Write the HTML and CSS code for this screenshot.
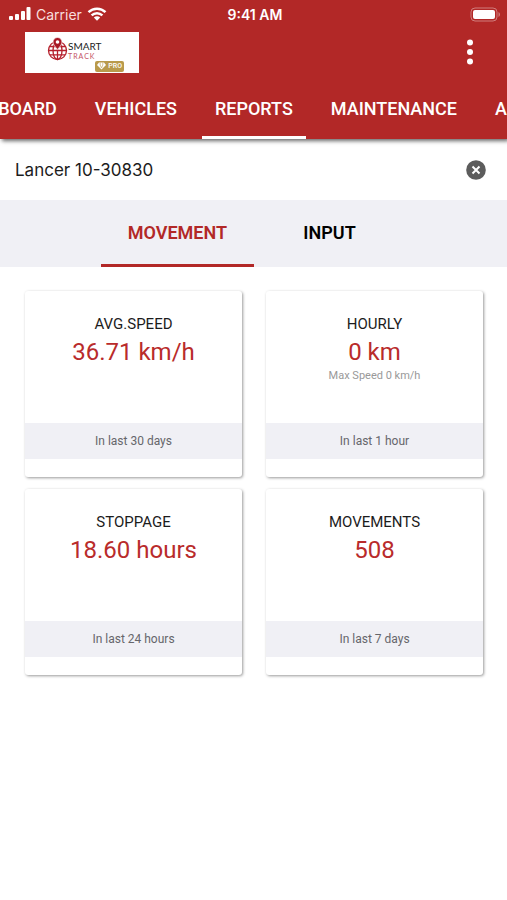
FILE: index.html
```html
<!DOCTYPE html>
<html lang="en">
<head>
<meta charset="utf-8">
<meta name="viewport" content="width=device-width, initial-scale=1">
<title>Smart Track Pro</title>
<link rel="stylesheet" href="styles.css">
</head>
<body>
<header class="app-header">
  <div class="status-bar">
    <div class="carrier">
      <svg width="22" height="14" viewBox="0 0 22 14" fill="#fff" aria-hidden="true">
        <rect x="0" y="9" width="4" height="4" rx="1"/><rect x="6" y="7" width="4" height="6" rx="1"/><rect x="12" y="4" width="4" height="9" rx="1"/><rect x="17.500" y="0" width="4" height="13" rx="1"/>
      </svg>
      <span>Carrier</span>
      <svg width="20" height="14" viewBox="0 0 20 14" aria-hidden="true">
        <path d="M1.500 5.200C6.300.600 13.700.600 18.500 5.200M4.600 8.300c3.100-2.900 7.700-2.900 10.800 0" fill="none" stroke="#fff" stroke-width="2.500"/>
        <path d="M6.800 10.600c1.800-1.700 4.600-1.700 6.400 0L10 13.800z" fill="#fff"/>
      </svg>
    </div>
    <time class="clock">9:41 AM</time>
    <svg class="battery" width="31" height="15" viewBox="0 0 31 15" aria-hidden="true">
      <rect x="1" y="1" width="26" height="13" rx="4" fill="none" stroke="#d07c7c"/>
      <rect x="3" y="3" width="22" height="9" rx="2" fill="#fff"/>
      <path d="M28.500 5c2 1 2 4 0 5z" fill="#d07c7c"/>
    </svg>
  </div>
  <div class="brand-bar">
    <a class="logo" href="#" aria-label="Smart Track Pro">
      <svg class="globe" width="21" height="24" viewBox="0 0 21 24" aria-hidden="true">
        <g fill="none" stroke="#b51f2b" stroke-width="1.300">
          <circle cx="10.500" cy="13.500" r="9"/><ellipse cx="10.500" cy="13.500" rx="4.500" ry="9"/>
          <path d="M10.500 8v14.500M1.500 13.500h18M3 9.500h15M3 17.800h15"/>
        </g>
        <path d="M10.500 12.500C8 9.500 6 7.500 6 5a4.500 4.500 0 0 1 9 0c0 2.500-2 4.500-4.500 7.500z" fill="#a81724" stroke="#fff" stroke-width=".7"/>
        <circle cx="10.500" cy="5" r="1.800" fill="#fff"/>
      </svg>
      <span class="logo-text"><span class="smart">SMART</span><span class="track">TRACK</span></span>
      <span class="pro"><svg width="9" height="8" viewBox="0 0 9 8" aria-hidden="true"><path d="M2 .5h5l2 2.500-4.500 4.500L0 3z" fill="#fff"/><path d="M3.200.500v2.500l1.300 3 1.300-3V.500" fill="none" stroke="#b99a4b" stroke-width=".6"/></svg>PRO</span>
    </a>
    <button class="more" type="button" aria-label="More options">
      <svg width="6" height="26" viewBox="0 0 6 26" fill="#fff" aria-hidden="true"><circle cx="3" cy="3.500" r="3"/><circle cx="3" cy="13" r="3"/><circle cx="3" cy="22.500" r="3"/></svg>
    </button>
  </div>
  <nav class="main-nav">
    <div class="nav-track">
      <a href="#">DASHBOARD</a>
      <a href="#">VEHICLES</a>
      <a href="#" class="current" aria-current="page">REPORTS</a>
      <a href="#">MAINTENANCE</a>
      <a href="#">ALERTS</a>
    </div>
  </nav>
</header>
<main>
  <div class="vehicle">
    <input class="vehicle-input" type="text" value="Lancer 10-30830" aria-label="Vehicle">
    <button class="clear" type="button" aria-label="Clear">
      <svg width="20" height="20" viewBox="0 0 20 20" aria-hidden="true"><circle cx="10" cy="10" r="9.800" fill="#5c5c5c"/><path d="M6.500 6.500l7 7M13.500 6.500l-7 7" stroke="#fff" stroke-width="2"/></svg>
    </button>
  </div>
  <div class="report-tabs">
    <button class="report-tab selected" type="button">MOVEMENT</button>
    <button class="report-tab" type="button">INPUT</button>
  </div>
  <section class="cards">
    <article class="card">
      <div class="card-body"><h2>AVG.SPEED</h2><p class="value">36.71 km/h</p></div>
      <p class="period">In last 30 days</p>
    </article>
    <article class="card">
      <div class="card-body"><h2>HOURLY</h2><p class="value">0 km</p><p class="note">Max Speed 0 km/h</p></div>
      <p class="period">In last 1 hour</p>
    </article>
    <article class="card">
      <div class="card-body"><h2>STOPPAGE</h2><p class="value">18.60 hours</p></div>
      <p class="period">In last 24 hours</p>
    </article>
    <article class="card">
      <div class="card-body"><h2>MOVEMENTS</h2><p class="value">508</p></div>
      <p class="period">In last 7 days</p>
    </article>
  </section>
</main>
</body>
</html>
```
FILE: styles.css
```css
* { box-sizing: border-box; }
body { margin: 0; background: #fff; color: #1c1c1c; font-family: Roboto, sans-serif; }
h2, p { margin: 0; font-weight: 400; }
button { border: 0; padding: 0; background: none; font: inherit; }
a { color: inherit; text-decoration: none; }
svg { display: block; }

.app-header { background: #b22827; color: #fff; box-shadow: 2px 2px 4px rgba(0, 0, 0, 0.6); }
.status-bar { display: grid; grid-template-columns: 1fr auto 1fr; align-items: center; height: 28px; padding: 0 6px 0 9px; font-family: Inter, sans-serif; font-size: 14px; }
.carrier { display: flex; align-items: center; gap: 5px; color: #f8dede; }
.clock { font-weight: 600; }
.battery { justify-self: end; }

.brand-bar { display: flex; align-items: center; justify-content: space-between; height: 48px; padding: 0 32px 0 25px; }
.logo { position: relative; display: flex; width: 114px; height: 41px; padding: 5px 0 0 22px; background: #fff; }
.logo-text { display: flex; flex-direction: column; padding-top: 3px; font-family: Lato, sans-serif; }
.smart { color: #222; font-size: 10px; line-height: 12px; }
.track { color: #c55465; font-size: 7px; line-height: 9px; letter-spacing: 1px; }
.pro { position: absolute; right: 15px; bottom: 1px; display: flex; align-items: center; gap: 2px; height: 11px; padding: 0 2px; border-radius: 2px; background: #b99a4b; color: #fff; font-size: 7px; font-weight: 500; }
.more { padding: 0 2px; }

.main-nav { overflow: hidden; }
.nav-track { display: flex; gap: 12px; width: max-content; height: 63px; margin-left: -62px; font-size: 18px; font-weight: 500; line-height: 24px; }
.nav-track a { padding: 21px 13px 0; border-bottom: 3px solid transparent; }
.nav-track .current { border-color: #fff; }

.vehicle { display: flex; align-items: center; height: 61px; padding: 0 21px 0 15px; }
.vehicle-input { flex: 1; min-width: 0; border: 0; padding: 0; outline: 0; background: none; color: #1c1c1c; font-family: Inter, sans-serif; font-size: 17px; }

.report-tabs { display: flex; justify-content: center; height: 67px; background: #f0f0f5; }
.report-tab { width: 30%; border-bottom: 3px solid transparent; color: #000; font-size: 18px; font-weight: 600; }
.report-tab.selected { border-color: #b22827; color: #b22827; }

.cards { display: grid; grid-template-columns: 1fr 1fr; gap: 12px 24px; padding: 24px 24px 24px 25px; }
.card { padding-bottom: 18px; border-radius: 3px; background: #fff; box-shadow: 1px 1px 3px rgba(0, 0, 0, 0.4); text-align: center; }
.card-body { min-height: 132px; padding-top: 23px; }
.card h2 { font-size: 15px; line-height: 20px; }
.value { color: #b92b2b; font-size: 24px; line-height: 36px; }
.note { color: #999; font-size: 11px; line-height: 12px; }
.period { background: #f0f0f5; color: #66666b; font-size: 12px; line-height: 36px; }
```
